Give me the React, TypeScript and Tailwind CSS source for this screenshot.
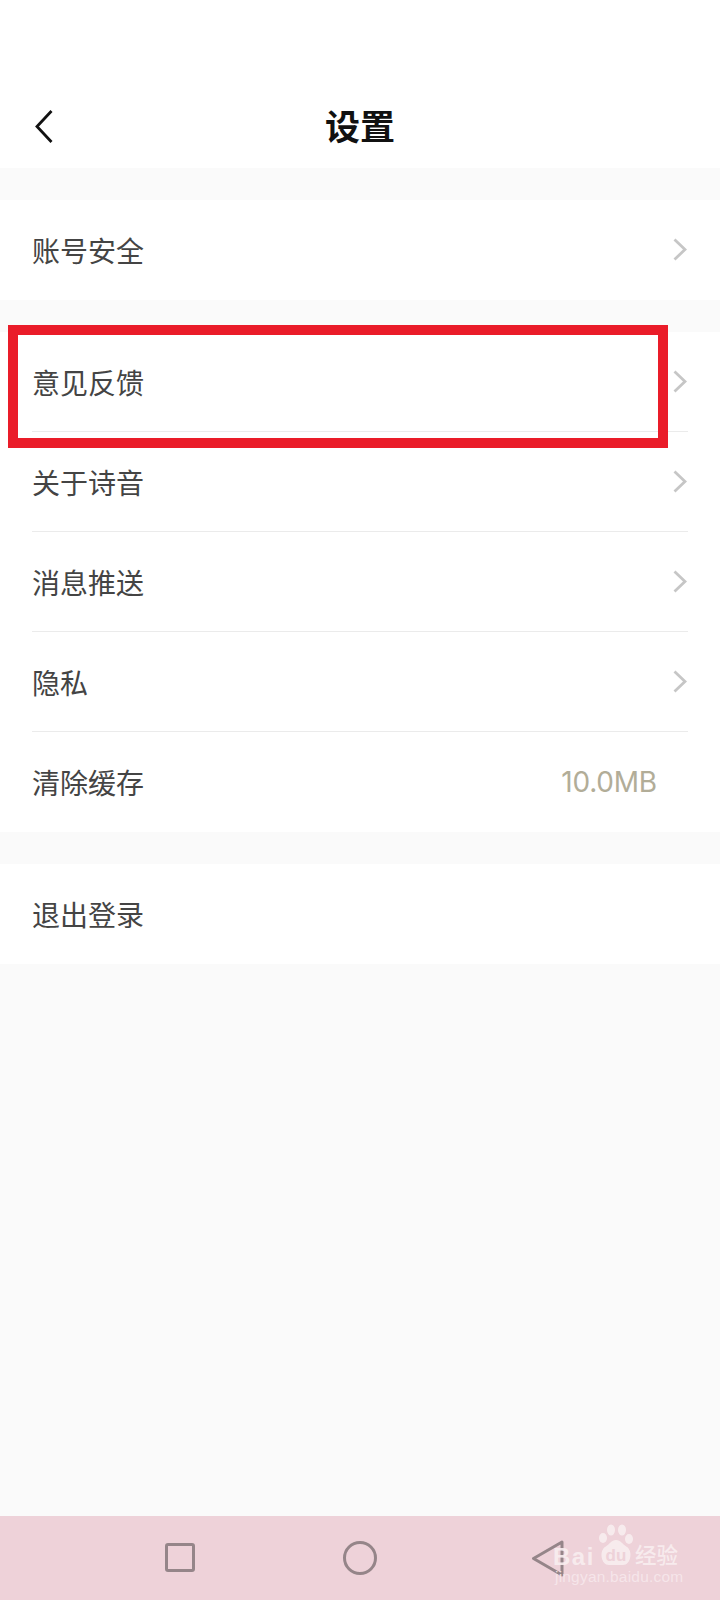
import React from 'react';

const font = "font-['Noto_Sans_CJK_SC','Noto_Sans',sans-serif]";

const Chevron: React.FC = () => (
  <svg width="14" height="23" viewBox="0 0 14 23" fill="none" className="shrink-0 mt-[-1px] mr-[1px]">
    <path d="M1.5 1.5 L12 11.5 L1.5 21.5" stroke="#c6c6c6" strokeWidth="2.8" />
  </svg>
);

const Row: React.FC<{ label: string; value?: string; divider?: boolean; arrow?: boolean }> = ({ label, value, divider, arrow = true }) => (
  <div className="h-[100px] pl-8 pr-8 relative flex items-center justify-between">
    <span className="text-[28px] leading-none font-normal text-[#444444] mt-[-1px]">{label}</span>
    {arrow && <Chevron />}
    {value && (
      <span className="text-[28px] leading-none text-[#b2ad98] font-['Inter',sans-serif] mr-[31px] tracking-[-0.2px]">{value}</span>
    )}
    {divider && <div className="absolute left-8 right-8 bottom-[0px] h-[1px] bg-[#ebebeb]" />}
  </div>
);

const Watermark: React.FC = () => (
  <div className="absolute left-[553px] top-[1522px] w-[130px] h-[62px] opacity-90">
    <svg width="36" height="44" viewBox="0 0 36 44" className="absolute left-[45px] top-0" fill="#f9eef0">
      <ellipse cx="5" cy="16" rx="4" ry="5" />
      <ellipse cx="13" cy="8" rx="4" ry="5.5" />
      <ellipse cx="24" cy="8" rx="4" ry="5.5" />
      <ellipse cx="31" cy="17" rx="4" ry="5" />
      <path d="M18 18 C23 18 24 22 29 25 C35 29 33 43 25 43 L11 43 C3 43 1 29 7 25 C12 22 13 18 18 18 Z" />
    </svg>
    <div className="absolute left-[46px] top-[24px] w-[34px] h-[18px] flex items-center justify-center font-['Liberation_Sans',sans-serif] font-bold text-[17px] leading-none text-[#eed2d9]">du</div>
    <div className="absolute left-0 top-[23px] font-['Liberation_Sans',sans-serif] font-bold text-[24px] tracking-[1.5px] leading-none text-[#f9eef0]">Bai</div>
    <div className="absolute left-[82px] top-[21px] font-['Noto_Sans_CJK_SC',sans-serif] font-medium text-[21.5px] leading-none text-[#f9eef0]">经验</div>
    <div className="absolute left-[2px] top-[47px] text-[15.5px] leading-none tracking-[0.2px] text-[#f7e8ec] font-['Liberation_Sans',sans-serif]">jingyan.baidu.com</div>
  </div>
);

export default function App() {
  return (
    <div lang="zh-CN" className={`relative w-[720px] h-[1600px] flex flex-col bg-[#fafafa] ${font}`}>
      <header className="h-[168px] shrink-0 bg-white pt-[110px] pl-[35px] flex items-start relative">
        <svg width="18" height="33" viewBox="0 0 18 33" fill="none">
          <path d="M16.5 1 L2 16.5 L16.5 32" stroke="#111" strokeWidth="2.8" />
        </svg>
        <h1 className="flex-1 text-center pr-[53px] text-[35px] leading-[30px] font-bold text-[#111]">设置</h1>
      </header>

      <section className="mt-8 bg-white">
        <Row label="账号安全" />
      </section>

      <section className="mt-8 bg-white">
        <Row label="意见反馈" divider />
        <Row label="关于诗音" divider />
        <Row label="消息推送" divider />
        <Row label="隐私" divider />
        <Row label="清除缓存" value="10.0MB" arrow={false} />
      </section>

      <section className="mt-8 bg-white">
        <Row label="退出登录" arrow={false} />
      </section>

      <div className="flex-1" />

      <nav className="h-[84px] shrink-0 bg-[#eed2d9] relative">
        <div className="absolute left-[165px] top-[27px] w-[30px] h-[29px] border-[3px] border-[#958589] rounded-[3px]" />
        <div className="absolute left-[343px] top-[25px] w-[34px] h-[34px] border-[3px] border-[#958589] rounded-full" />
        <svg width="34" height="37" viewBox="0 0 34 37" fill="none" className="absolute left-[531px] top-[24px]">
          <path d="M31 2 L2.5 18.5 L31 35 Z" stroke="#958589" strokeWidth="3" strokeLinejoin="round" />
        </svg>
      </nav>

      <div className="absolute left-[8px] top-[325px] w-[660px] h-[123px] border-[10px] border-[#ea1c29]" />
      <Watermark />
    </div>
  );
}
